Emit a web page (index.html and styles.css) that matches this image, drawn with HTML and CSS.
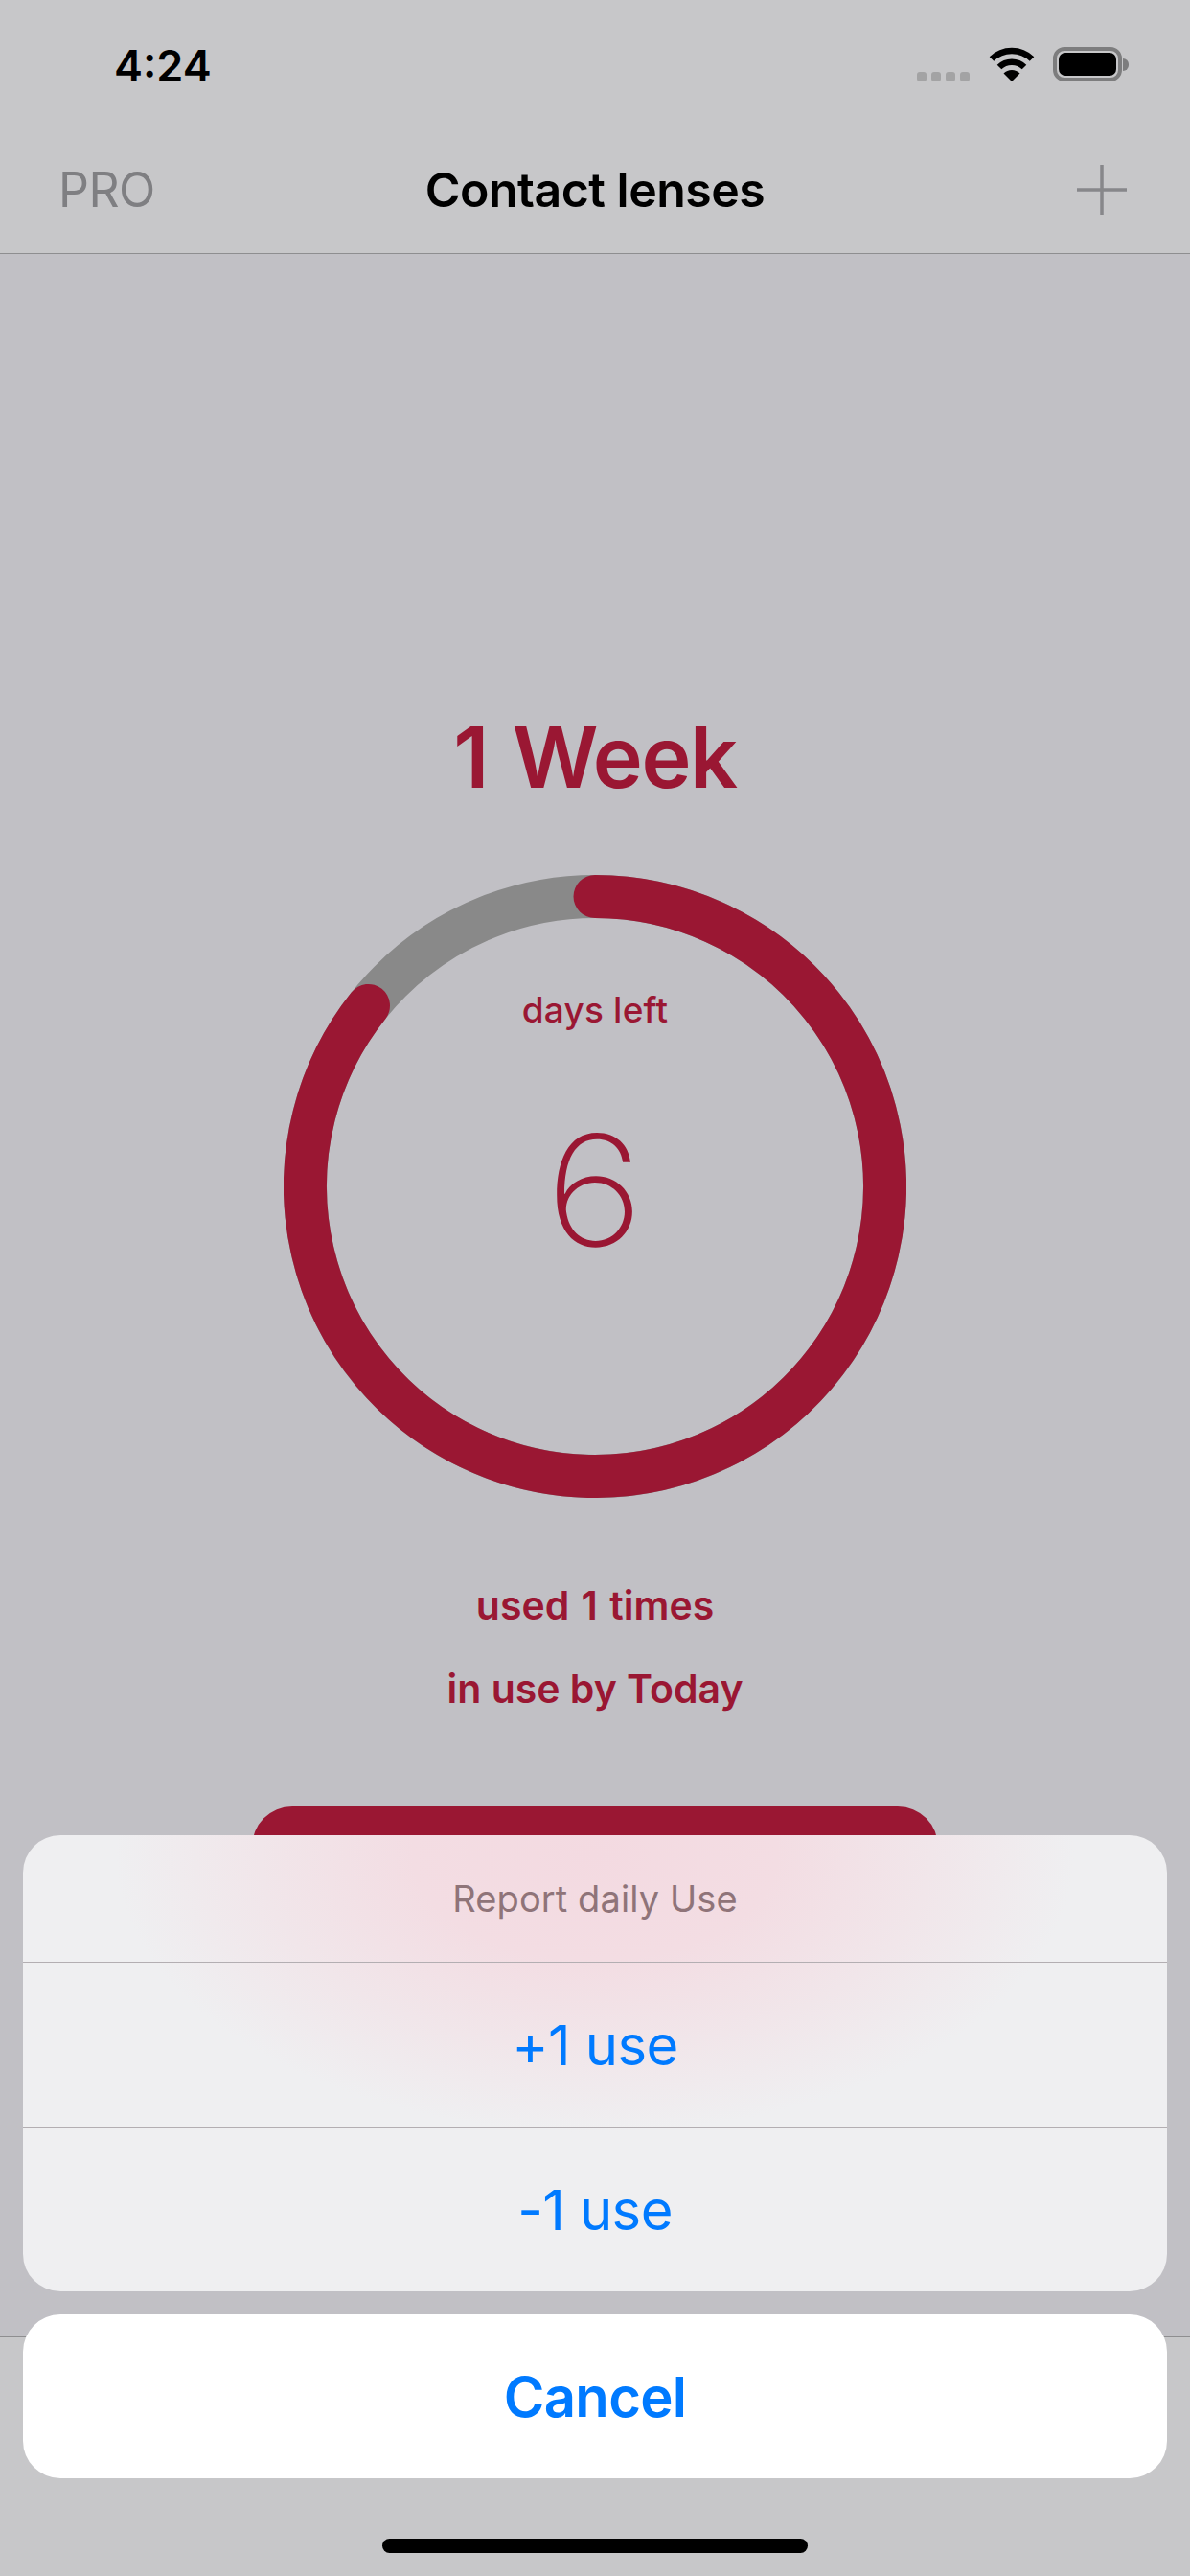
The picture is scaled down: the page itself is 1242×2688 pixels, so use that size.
FILE: index.html
```html
<!DOCTYPE html>
<html lang="en">
<head>
<meta charset="utf-8">
<title>Contact lenses</title>
<link rel="stylesheet" href="styles.css">
</head>
<body>
<div class="screen">
  <header class="top">
    <div class="status">
      <span class="time">4:24</span>
      <div class="status-icons">
        <div class="signal"><i></i><i></i><i></i><i></i></div>
        <svg class="wifi" viewBox="0 0 48 36" aria-hidden="true">
          <path d="M3 12.500A30 30 0 0 1 45 12.500" fill="none" stroke="#000" stroke-width="6.500"/>
          <path d="M11 21A18.500 18.500 0 0 1 37 21" fill="none" stroke="#000" stroke-width="6.500"/>
          <path d="M24 36L15.500 27.500A12 12 0 0 1 32.500 27.500Z" fill="#000"/>
        </svg>
        <div class="battery"><div class="battery-fill"></div></div>
        <div class="battery-nub"></div>
      </div>
    </div>
    <nav class="nav">
      <span class="pro">PRO</span>
      <span class="title">Contact lenses</span>
      <svg class="plus" viewBox="0 0 52 52" aria-hidden="true">
        <path d="M26 0V52M0 26H52" stroke="#87878a" stroke-width="3.500" fill="none"/>
      </svg>
    </nav>
  </header>

  <main class="main">
    <h1 class="period">1 Week</h1>
    <div class="ring">
      <svg class="ring-svg" viewBox="0 0 650 650" aria-hidden="true">
        <circle cx="325" cy="325" r="302.500" fill="none" stroke="#898989" stroke-width="45"/>
        <path d="M325 22.500A302.500 302.500 0 1 1 88.500 136.400" fill="none" stroke="#9a1733" stroke-width="45" stroke-linecap="round"/>
      </svg>
      <span class="days-label">days left</span>
      <span class="days-num">6</span>
    </div>
    <p class="info info-first">used 1 times</p>
    <p class="info">in use by Today</p>
    <div class="report-btn"></div>
  </main>

  <footer class="tabbar"></footer>

  <div class="sheet-wrap">
    <div class="sheet">
      <div class="sheet-title">Report daily Use</div>
      <div class="sheet-row">+1 use</div>
      <div class="sheet-row">-1 use</div>
    </div>
    <div class="cancel">Cancel</div>
  </div>
  <div class="home-bar"></div>
</div>
</body>
</html>
```
FILE: styles.css
```css
* { box-sizing: border-box; }
html, body { margin: 0; padding: 0; }
body { width: 1242px; height: 2688px; overflow: hidden; font-family: Inter, "Liberation Sans", sans-serif; }
.screen { position: relative; width: 1242px; height: 2688px; display: flex; flex-direction: column; background: #c1c0c5; overflow: hidden; }

.top { height: 265px; background: #c7c7c9; border-bottom: 1.5px solid #8e8e90; display: flex; flex-direction: column; }
.status { height: 140px; padding: 46px 64px 0 119px; display: flex; justify-content: space-between; align-items: flex-start; }
.time { font-size: 45px; line-height: 46px; font-weight: 600; color: #000; }
.status-icons { display: flex; align-items: flex-start; padding-top: 3px; }
.signal { display: flex; gap: 5px; margin: 26px 20px 0 0; }
.signal i { width: 10px; height: 10px; border-radius: 3px; background: #a3a3a4; }
.wifi { width: 48px; height: 36px; margin-right: 19px; display: block; }
.battery { width: 72px; height: 36px; border: 4px solid #7d7d7e; border-radius: 12px; padding: 2px; }
.battery-fill { width: 100%; height: 100%; background: #000; border-radius: 7px; }
.battery-nub { width: 6px; height: 13px; margin-top: 12px; margin-left: 1px; background: #7d7d7e; border-radius: 0 7px 7px 0; }

.nav { flex: 1; display: grid; grid-template-columns: 1fr auto 1fr; align-items: start; padding: 30px 66px 0 61px; }
.pro { font-size: 50px; line-height: 56px; color: #7f7f82; font-weight: 400; letter-spacing: -0.5px; }
.title { font-size: 50px; line-height: 56px; font-weight: 600; color: #000; letter-spacing: -0.5px; transform: translateX(2.5px); }
.plus { width: 52px; height: 52px; display: block; justify-self: end; margin-top: 2px; }

.main { flex: 1; display: flex; flex-direction: column; align-items: center; padding-top: 475px; }
.period { margin: 0; font-size: 88px; line-height: 100px; font-weight: 600; color: #9a1733; letter-spacing: -1.4px; word-spacing: 5px; }
.ring { position: relative; width: 650px; height: 650px; margin-top: 73px; flex: none; display: flex; flex-direction: column; align-items: center; }
.ring-svg { position: absolute; left: 0; top: 0; width: 650px; height: 650px; }
.days-label { margin-top: 118px; font-size: 37px; line-height: 46px; font-weight: 500; color: #9a1733; letter-spacing: 0.2px; }
.days-num { margin-top: 75px; font-size: 160px; line-height: 180px; font-weight: 200; color: #9a1733; transform: scaleX(1.1); }
.info { margin: 0; font-size: 41px; line-height: 50px; font-weight: 600; color: #9a1733; }
.info-first { margin: 87px 0 37px; word-spacing: 2px; }
.report-btn { width: 716px; height: 140px; margin-top: 98px; flex: none; border-radius: 42px; background: #9a1733; }

.tabbar { height: 250px; flex: none; background: #c7c7c9; border-top: 1.5px solid #8e8e90; margin-top: auto; }

.sheet-wrap { position: absolute; left: 24px; top: 1915px; width: 1194px; display: flex; flex-direction: column; gap: 24px; }
.sheet { height: 476px; border-radius: 39px; display: flex; flex-direction: column; overflow: hidden;
  background: radial-gradient(ellipse 500px 290px at 597px 20px, #f3dae1 0%, #f3dde3 38%, #f1e6ea 70%, #efeff1 100%), #efeff1; }
.sheet-title { height: 132px; display: flex; align-items: center; justify-content: center; font-size: 38px; color: #8f7479; letter-spacing: 0.1px; }
.sheet-row { height: 172px; display: flex; align-items: center; justify-content: center; border-top: 1.5px solid #b3aeb2; font-size: 58px; color: #007aff; letter-spacing: -0.6px; }
.cancel { height: 171px; border-radius: 39px; background: #fff; display: flex; align-items: center; justify-content: center; font-size: 58px; font-weight: 600; color: #007aff; letter-spacing: -0.7px; }
.home-bar { position: absolute; left: 399px; top: 2649px; width: 444px; height: 15px; border-radius: 8px; background: #000; }
```
